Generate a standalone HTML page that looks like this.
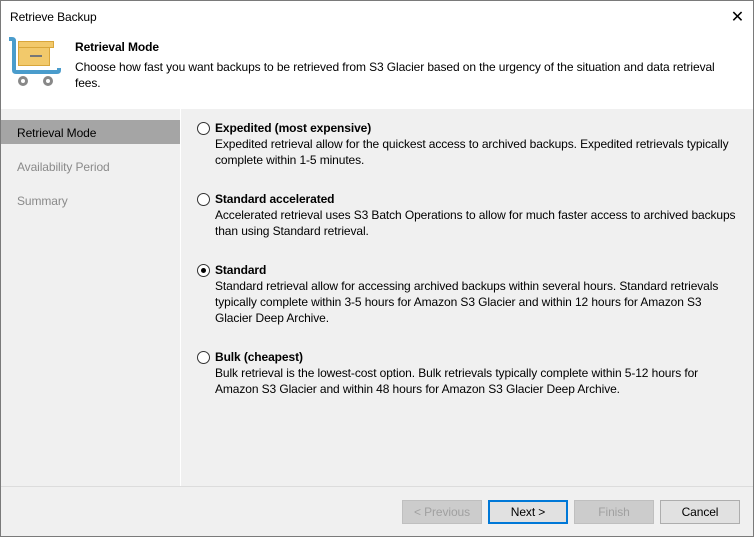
<!DOCTYPE html>
<html><head><style>
*{margin:0;padding:0;box-sizing:border-box}
body{width:754px;height:537px;overflow:hidden;background:#fff;font-family:"Liberation Sans",sans-serif;font-size:12px;color:#000;letter-spacing:-0.1px}
.win{position:absolute;left:0;top:0;width:754px;height:537px;border:1px solid #7a7a7a;background:#f0f0f0}
.title{position:absolute;left:0;top:0;width:752px;height:32px;background:#fff}
.title span{position:absolute;left:9px;top:9px;font-size:12px}
.x{position:absolute;right:9px;top:6px;font-size:16px}
.hdr{position:absolute;left:0;top:32px;width:752px;height:76px;background:#fff}
.hdr b{position:absolute;left:74px;top:7px;font-size:12px}
.hdr p{position:absolute;left:74px;top:26px;line-height:16px;white-space:nowrap}
.nav{position:absolute;left:0;top:108px;width:180px;height:377px;background:#f0f0f0;border-right:1px solid #fff}
.nav div{height:24px;padding:6px 0 0 16px;margin-bottom:10px;color:#8a8a8a}
.nav .sel{background:#a5a5a5;color:#000;margin-top:11px}
.opt{position:absolute;left:196px;white-space:nowrap;line-height:16px}
.opt .r{position:absolute;left:0;top:2px;width:13px;height:13px;border:1px solid #333;border-radius:50%;background:#fff}
.opt .r.on::after{content:"";position:absolute;left:3px;top:3px;width:5px;height:5px;border-radius:50%;background:#000}
.opt b{display:block;margin-left:18px;font-size:12px}
.opt p{margin-left:18px}
.sep{position:absolute;left:0;top:485px;width:752px;height:1px;background:#dcdcdc}
.btn{position:absolute;top:499px;width:80px;height:24px;border:1px solid #adadad;background:#e1e1e1;text-align:center;line-height:22px;font-size:12px}
.dis{color:#a0a0a0;background:#cccccc;border-color:#bfbfbf}
</style></head><body><div class="win">
<div class="title"><span>Retrieve Backup</span><div class="x">✕</div></div>
<div class="hdr">
<svg style="position:absolute;left:0;top:0" width="64" height="56" viewBox="0 0 64 56">
<path d="M8 6 H11 Q13 6 13 8 V37 Q13 39 15 39 H56 Q58 39 58 37 V35" fill="none" stroke="#4a9ccc" stroke-width="4"/>
<rect x="17.5" y="14.5" width="31" height="18" fill="#f2c96b" stroke="#d9a63b"/>
<rect x="17.5" y="8.5" width="35" height="6" fill="#f2c96b" stroke="#d9a63b"/>
<rect x="29" y="22" width="12" height="2" fill="#777"/>
<circle cx="22" cy="48" r="3.5" fill="#fff" stroke="#888" stroke-width="3"/>
<circle cx="47" cy="48" r="3.5" fill="#fff" stroke="#888" stroke-width="3"/>
</svg>
<b>Retrieval Mode</b>
<p>Choose how fast you want backups to be retrieved from S3 Glacier based on the urgency of the situation and data retrieval<br>fees.</p>
</div>
<div class="nav"><div class="sel">Retrieval Mode</div><div>Availability Period</div><div>Summary</div></div>
<div class="opt" style="top:119px"><div class="r"></div><b>Expedited (most expensive)</b><p>Expedited retrieval allow for the quickest access to archived backups. Expedited retrievals typically<br>complete within 1-5 minutes.</p></div>
<div class="opt" style="top:190px"><div class="r"></div><b>Standard accelerated</b><p>Accelerated retrieval uses S3 Batch Operations to allow for much faster access to archived backups<br>than using Standard retrieval.</p></div>
<div class="opt" style="top:261px"><div class="r on"></div><b>Standard</b><p>Standard retrieval allow for accessing archived backups within several hours. Standard retrievals<br>typically complete within 3-5 hours for Amazon S3 Glacier and within 12 hours for Amazon S3<br>Glacier Deep Archive.</p></div>
<div class="opt" style="top:348px"><div class="r"></div><b>Bulk (cheapest)</b><p>Bulk retrieval is the lowest-cost option. Bulk retrievals typically complete within 5-12 hours for<br>Amazon S3 Glacier and within 48 hours for Amazon S3 Glacier Deep Archive.</p></div>
<div class="sep"></div>
<div class="btn dis" style="left:401px">&lt; Previous</div>
<div class="btn" style="left:487px;border:2px solid #0078d7;line-height:20px">Next &gt;</div>
<div class="btn dis" style="left:573px">Finish</div>
<div class="btn" style="left:659px">Cancel</div>
</div></body></html>
